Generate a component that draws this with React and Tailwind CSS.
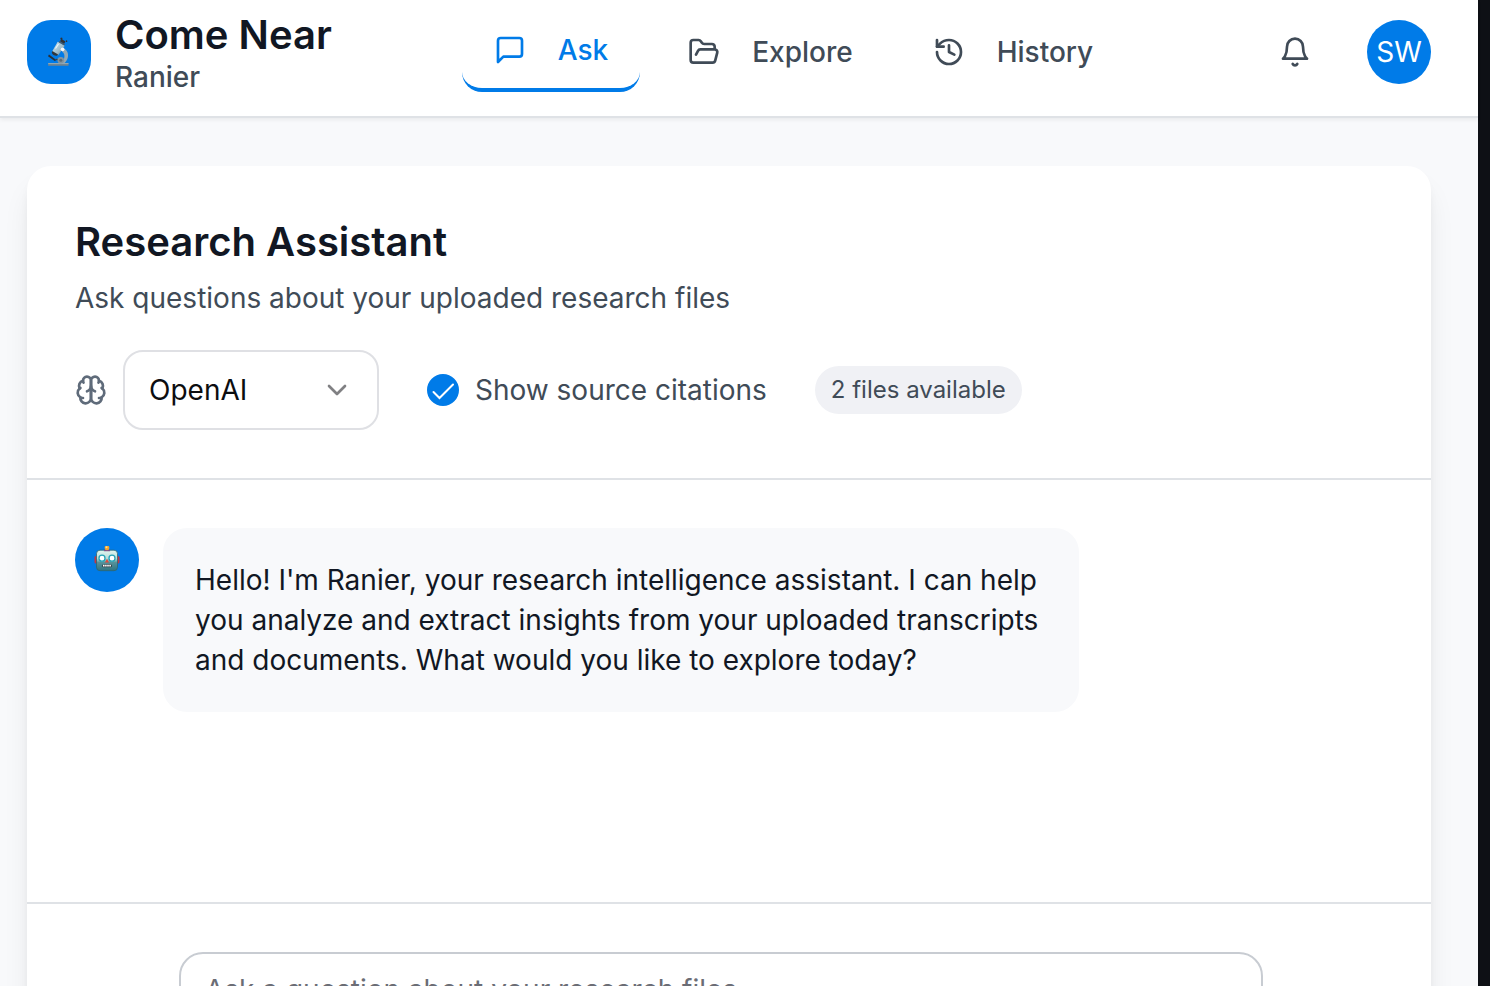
import React from 'react';

function Icon({ children, className = '' }) {
  return (
    <svg
      viewBox="0 0 24 24"
      fill="none"
      stroke="currentColor"
      strokeWidth="2"
      strokeLinecap="round"
      strokeLinejoin="round"
      aria-hidden="true"
      className={`size-8 shrink-0 ${className}`}
    >
      {children}
    </svg>
  );
}

const MessageIcon = () => (
  <Icon>
    <path d="M21 15a2 2 0 0 1-2 2H7l-4 4V5a2 2 0 0 1 2-2h14a2 2 0 0 1 2 2z" />
  </Icon>
);

const FolderIcon = () => (
  <Icon>
    <path d="m6 14 1.5-2.9A2 2 0 0 1 9.24 10H20a2 2 0 0 1 1.94 2.5l-1.54 6a2 2 0 0 1-1.95 1.5H4a2 2 0 0 1-2-2V5a2 2 0 0 1 2-2h3.9a2 2 0 0 1 1.69.9l.81 1.2a2 2 0 0 0 1.67.9H18a2 2 0 0 1 2 2v2" />
  </Icon>
);

const HistoryIcon = () => (
  <Icon>
    <path d="M3 12a9 9 0 1 0 9-9 9.75 9.75 0 0 0-6.74 2.74L3 8" />
    <path d="M3 3v5h5" />
    <path d="M12 7v5l4 2" />
  </Icon>
);

const BellIcon = () => (
  <Icon>
    <path d="M6 8a6 6 0 0 1 12 0c0 7 3 9 3 9H3s3-2 3-9" />
    <path d="M10.3 21a1.94 1.94 0 0 0 3.4 0" />
  </Icon>
);

const BrainIcon = () => (
  <Icon className="text-[#5f6b7a]">
    <path d="M12 5a3 3 0 1 0-5.997.125 4 4 0 0 0-2.526 5.77 4 4 0 0 0 .556 6.588A4 4 0 1 0 12 18Z" />
    <path d="M12 5a3 3 0 1 1 5.997.125 4 4 0 0 1 2.526 5.77 4 4 0 0 1-.556 6.588A4 4 0 1 1 12 18Z" />
    <path d="M15 13a4.5 4.5 0 0 1-3-4 4.5 4.5 0 0 1-3 4" />
    <path d="M17.599 6.5a3 3 0 0 0 .399-1.375" />
    <path d="M6.003 5.125A3 3 0 0 0 6.401 6.5" />
    <path d="M3.477 10.896a4 4 0 0 1 .585-.396" />
    <path d="M19.938 10.5a4 4 0 0 1 .585.396" />
    <path d="M6 18a4 4 0 0 1-1.967-.516" />
    <path d="M19.967 17.484A4 4 0 0 1 18 18" />
  </Icon>
);

const Microscope = () => (
  <svg viewBox="0 0 30 30" className="size-[30px]" aria-hidden="true">
    <defs>
      <linearGradient id="tube" x1="0" y1="0" x2="1" y2="1">
        <stop offset="0" stopColor="#d3e8f0" />
        <stop offset="0.6" stopColor="#9dbccb" />
        <stop offset="1" stopColor="#5b707c" />
      </linearGradient>
    </defs>
    <path d="M18.500 11c5.500 1.500 6.200 6.500 5.200 10-.6 2.200-1.800 3.700-3.200 5h-4c2.400-1.600 3.700-3.600 3.900-6 .2-2.300-.3-4.200-2.200-5.300z" fill="#91a9b5" />
    <path d="M4.200 26.200h20.300v2.600H4.200z" fill="#6c8290" />
    <path d="M4.200 26.200h20.300v.9H4.200z" fill="#9fb1bb" />
    <path d="m5 17.500 7 5.200-.9 1.600-7.100-5z" fill="#2c3034" />
    <path d="m12 22.400 4.500 1" stroke="#39434a" strokeWidth="1.400" />
    <circle cx="16.800" cy="23.300" r="3.300" fill="#8093a0" />
    <circle cx="16.800" cy="23.300" r="1.500" fill="#5c6c77" />
    <path d="m13.700 4.800 7 4-6.100 8.900c-1.700 1-6.400-1.300-6.300-3.500z" fill="url(#tube)" />
    <path d="m8.300 14 5.800 3.600-1.200 1.200c-2 .4-4.700-1.200-5.100-3z" fill="#30363b" />
    <path d="m15.500 4 5.600 3.400-.8 1.200-5.600-3.400z" fill="#4b5a63" />
    <path d="m17.300 1.800 4.200 2.600-1.400 2.400-4-2.500z" fill="#303236" />
    <path d="m16.500 1.800 1.800-.6M22 4.300l1.200-.2" stroke="#303236" strokeWidth="1.600" />
    <circle cx="18.600" cy="12.300" r="1.900" fill="#f5f8f9" />
    <path d="m11.500 11.500 3-4.500" stroke="#e8f5fa" strokeWidth="1.200" />
  </svg>
);

const Robot = () => (
  <svg viewBox="0 0 28 28" className="size-7" aria-hidden="true">
    <defs>
      <linearGradient id="robotHead" x1="0" y1="0" x2="0" y2="1">
        <stop offset="0" stopColor="#e4f7f1" />
        <stop offset="0.400" stopColor="#b5dcd9" />
        <stop offset="0.600" stopColor="#55929a" />
        <stop offset="1" stopColor="#2f7380" />
      </linearGradient>
    </defs>
    <rect x="1.500" y="10" width="4" height="7.500" rx="1.500" fill="#c23642" />
    <rect x="22.500" y="10" width="4" height="7.500" rx="1.500" fill="#c23642" />
    <rect x="3.500" y="4.200" width="21" height="20.500" rx="3.500" fill="url(#robotHead)" stroke="#2d6670" strokeWidth="0.800" />
    <path d="M10.800 5.200c0-3 6.400-3 6.400 0z" fill="#7c4f86" />
    <circle cx="14" cy="1.900" r="2.400" fill="#f3a32f" />
    <circle cx="13.500" cy="1.300" r="1" fill="#ffe08a" />
    <circle cx="9" cy="12.200" r="3" fill="#fff" stroke="#26a3b8" strokeWidth="1.300" />
    <circle cx="19" cy="12.200" r="3" fill="#fff" stroke="#26a3b8" strokeWidth="1.300" />
    <path d="m14 12.700 2 3.800h-4z" fill="#e04a3c" />
    <rect x="9" y="18.200" width="10" height="3" rx="1.500" fill="#34434a" />
    <path d="M10 19.700h8" stroke="#fff" strokeWidth="1.800" strokeDasharray="1.600 0.500" />
  </svg>
);

function NavTab({ icon, label, active = false }) {
  return (
    <a
      href={`#${label.toLowerCase()}`}
      aria-current={active ? 'page' : undefined}
      className={`flex h-20 items-center gap-8 rounded-[20px] px-8 text-[28px] leading-10 font-medium ${
        active ? 'border-b-4 border-[#007be8] text-[#007be8]' : 'text-[#404b57]'
      }`}
    >
      {icon}
      {label}
    </a>
  );
}

function Header() {
  return (
    <header className="relative border-b-2 border-[#dfe2e6] bg-white pr-[47px] pb-3 pl-[27px] shadow-[0_2px_4px_rgba(0,0,0,0.06)]">
      <div className="flex h-[104px] items-center justify-between">
        <div className="flex items-center gap-6">
          <div className="flex size-16 shrink-0 items-center justify-center rounded-3xl bg-[#007be8]">
            <Microscope />
          </div>
          <div className="pt-[6px] whitespace-nowrap">
            <h1 className="text-[40px] leading-[44px] font-semibold text-[#111723]">Come Near</h1>
            <p className="text-[28px] leading-10 font-medium text-[#404b57]">Ranier</p>
          </div>
        </div>
        <nav className="flex items-center gap-4">
          <NavTab icon={<MessageIcon />} label="Ask" active />
          <NavTab icon={<FolderIcon />} label="Explore" />
          <NavTab icon={<HistoryIcon />} label="History" />
        </nav>
        <div className="flex items-center gap-8 text-[#404b57]">
          <button type="button" aria-label="Notifications" className="p-6">
            <BellIcon />
          </button>
          <button type="button" className="size-16 rounded-full bg-[#007be8] text-[28px] leading-10 text-white">
            SW
          </button>
        </div>
      </div>
    </header>
  );
}

function Controls() {
  return (
    <div className="mt-8 flex items-center gap-12">
      <div className="flex items-center gap-4">
        <BrainIcon />
        <div className="relative">
          <select
            aria-label="Model"
            className="h-20 w-64 appearance-none rounded-[20px] border-2 border-[#dfe0e4] bg-white pl-6 text-[28px] leading-10 text-[#0c0d10]"
          >
            <option>OpenAI</option>
          </select>
          <Icon className="pointer-events-none absolute top-6 right-[26px] text-[#808083]">
            <path d="m6 9 6 6 6-6" />
          </Icon>
        </div>
      </div>
      <label className="flex items-center gap-4 text-[28px] leading-10 text-[#404b57]">
        <span className="relative size-8">
          <input
            type="checkbox"
            defaultChecked
            className="peer block size-8 appearance-none rounded-full border-2 border-[#007be8] checked:bg-[#007be8]"
          />
          <svg
            viewBox="0 0 32 32"
            fill="none"
            stroke="#fff"
            strokeWidth="2"
            aria-hidden="true"
            className="pointer-events-none absolute inset-0 hidden size-8 peer-checked:block"
          >
            <path d="m6.500 18 6 6L26 10.500" strokeLinecap="round" />
          </svg>
        </span>
        Show source citations
      </label>
      <span className="rounded-full bg-[#f0f1f5] px-4 py-2 text-2xl leading-8 text-[#404b57]">2 files available</span>
    </div>
  );
}

export default function App() {
  return (
    <div className="flex h-screen overflow-hidden bg-[#0e1015] font-['Inter',sans-serif]">
      <div className="mr-3 min-w-0 flex-1 bg-[#f8f9fb]">
        <Header />
        <main className="pt-12 pr-[47px] pl-[27px]">
          <section className="rounded-3xl bg-white shadow-[0_20px_30px_-6px_rgba(0,0,0,0.1),0_8px_12px_-4px_rgba(0,0,0,0.08)]">
            <div className="border-b-2 border-[#dfe2e6] p-12">
              <h2 className="text-[40px] leading-[56px] font-semibold text-[#111723]">Research Assistant</h2>
              <p className="mt-2 text-[28px] leading-10 text-[#404b57]">Ask questions about your uploaded research files</p>
              <Controls />
            </div>
            <div className="flex min-h-[424px] items-start gap-6 border-b-2 border-[#dfe2e6] p-12">
              <div className="flex size-16 shrink-0 items-center justify-center rounded-full bg-[#007be8]">
                <Robot />
              </div>
              <p className="max-w-[916px] rounded-3xl bg-[#f8f9fb] p-8 text-[28px] leading-10 text-[#111723]">
                Hello! I'm Ranier, your research intelligence assistant. I can help you analyze and extract insights
                from your uploaded transcripts and documents. What would you like to explore today?
              </p>
            </div>
            <form className="p-12">
              <div className="mx-auto max-w-[1100px] pr-4">
                <textarea
                  rows={2}
                  aria-label="Question"
                  placeholder="Ask a question about your research files..."
                  className="block w-full resize-none rounded-3xl border-2 border-[#c8ccd2] bg-white px-6 py-4 text-[28px] leading-10 text-[#111723] placeholder:text-[#6b6d75]"
                />
              </div>
            </form>
          </section>
        </main>
      </div>
    </div>
  );
}
